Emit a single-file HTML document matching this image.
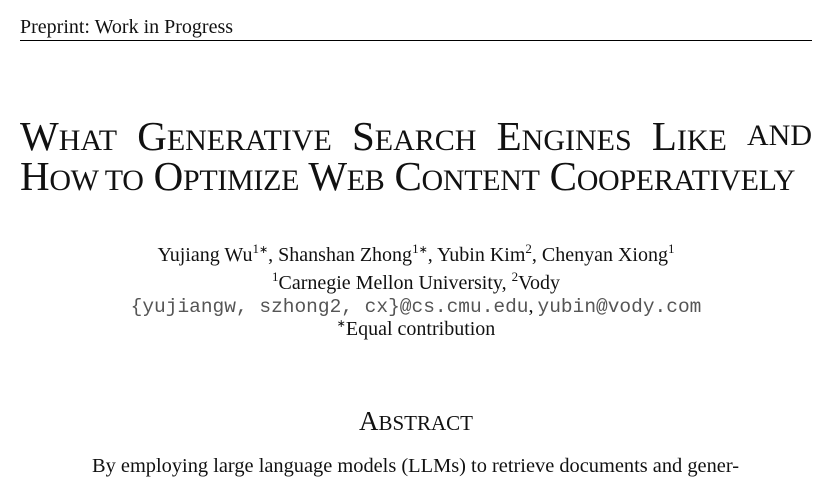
<!DOCTYPE html>
<html><head><style>
body{margin:0;width:832px;height:478px;background:#fff;position:relative;overflow:hidden;font-family:"Liberation Serif",serif;color:#111}
.a{position:absolute;white-space:nowrap}
.c{left:0;width:832px;text-align:center}
.sc{font-size:30px}
sup{font-size:13px;vertical-align:8px;line-height:0}
.st{font-size:11px}
.m{font-family:"Liberation Mono",monospace;font-size:19.5px;color:#555}
</style></head><body>
<div class="a" style="left:20px;top:16px;font-size:20px">Preprint: Work in Progress</div>
<div class="a" style="left:20px;top:40px;width:792px;height:1px;background:#000"></div>
<div class="a" style="left:20px;top:112px;width:792px;display:flex;justify-content:space-between;font-size:41px;line-height:48px">
<span>W<span class="sc">HAT</span></span><span>G<span class="sc">ENERATIVE</span></span><span>S<span class="sc">EARCH</span></span><span>E<span class="sc">NGINES</span></span><span>L<span class="sc">IKE</span></span><span class="sc">AND</span></div>
<div class="a" style="left:20px;top:152px;font-size:41px;line-height:48px;letter-spacing:-0.3px">H<span class="sc">OW TO</span> O<span class="sc">PTIMIZE</span> W<span class="sc">EB</span> C<span class="sc">ONTENT</span> C<span class="sc">OOPERATIVELY</span></div>
<div class="a c" style="top:244px;font-size:20px">Yujiang Wu<sup>1<span class="st">∗</span></sup>, Shanshan Zhong<sup>1<span class="st">∗</span></sup>, Yubin Kim<sup>2</sup>, Chenyan Xiong<sup>1</sup></div>
<div class="a c" style="top:272px;font-size:20px"><sup>1</sup>Carnegie Mellon University, <sup>2</sup>Vody</div>
<div class="a c" style="top:295px"><span class="m">{yujiangw, szhong2, cx}@cs.cmu.edu</span><span style="font-size:20px">,</span> <span class="m">yubin@vody.com</span></div>
<div class="a c" style="top:318px;font-size:20px"><sup class="st">∗</sup>Equal contribution</div>
<div class="a c" style="top:406px;font-size:27px">A<span style="font-size:21px">BSTRACT</span></div>
<div class="a" style="left:92px;top:455px;font-size:20.4px">By employing large language models (LLMs) to retrieve documents and gener-</div>
</body></html>
